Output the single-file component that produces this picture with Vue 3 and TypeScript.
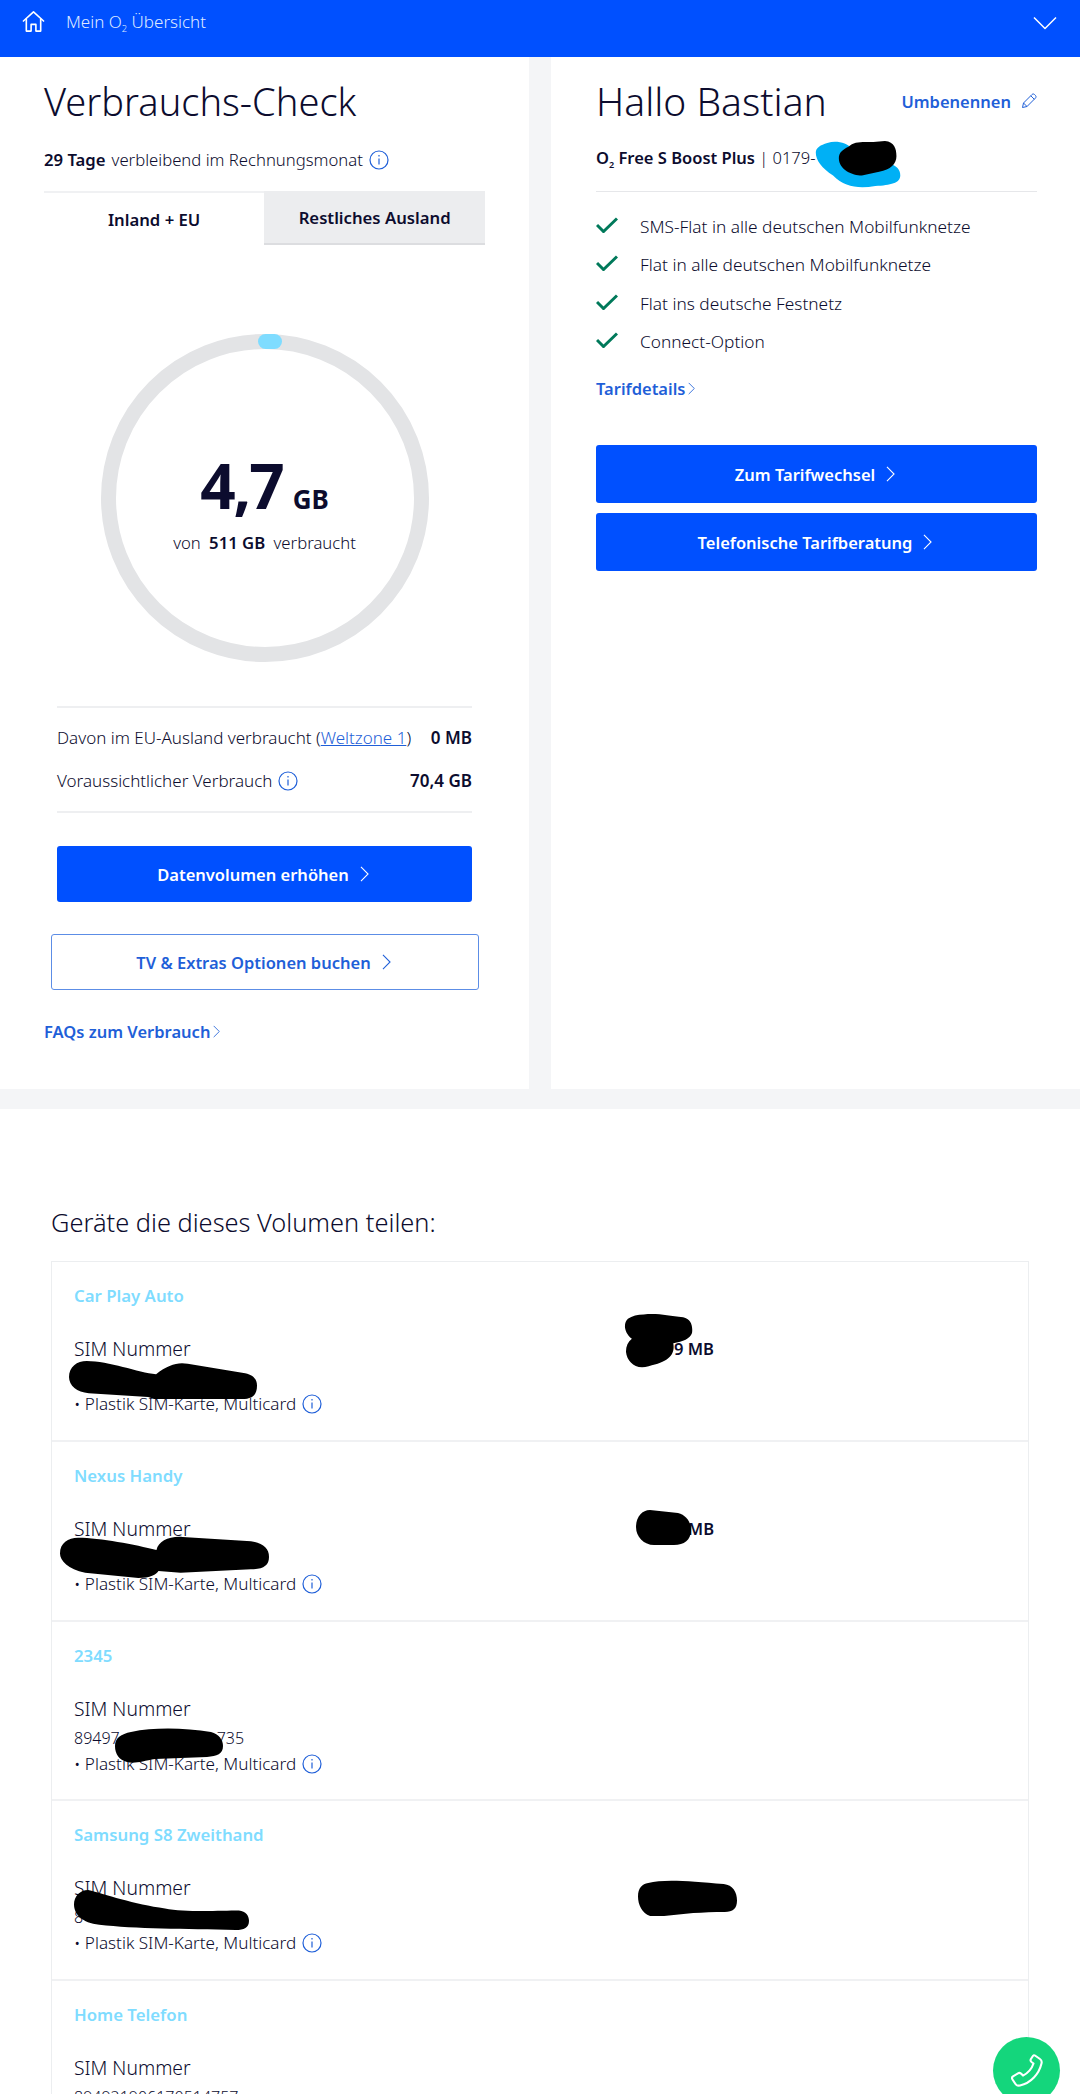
<script setup lang="ts">
interface Scribble { cls: string; d: string; vw: number; vh: number }
interface Device { name: string; sim: string; tail: string; amount: string; scribbles: Scribble[] }
const features: string[] = [
  'SMS-Flat in alle deutschen Mobilfunknetze',
  'Flat in alle deutschen Mobilfunknetze',
  'Flat ins deutsche Festnetz',
  'Connect-Option',
]
const devices: Device[] = [
  { name: 'Car Play Auto', sim: '', tail: '', amount: '9 MB', scribbles: [
    { cls: 's1a', vw: 190, vh: 42, d: 'M18 2C40 2 70 14 88 16C100 6 110 3 120 5L178 15C187 17 190 22 190 28C190 38 185 42 175 42L110 42C100 45 90 44 80 40L20 36C8 35 0 28 0 19C0 8 8 2 18 2Z' },
    { cls: 's1b', vw: 70, vh: 78, d: 'M20 2C35 0 45 4 60 6C68 8 70 18 69 28C67 36 60 40 50 42C52 58 46 68 25 74C12 80 3 68 2 54C2 46 4 40 8 36C0 28-1 14 4 8C8 4 14 2 20 2Z' },
  ] },
  { name: 'Nexus Handy', sim: '', tail: '', amount: 'MB', scribbles: [
    { cls: 's2a', vw: 208, vh: 48, d: 'M18 2C40 2 75 10 96 16C98 6 108 0 122 1L190 6C202 8 208 14 208 24C208 34 202 38 190 38L120 42L98 40C96 44 90 48 78 48L25 42C8 38 0 28 0 20C0 8 8 2 18 2Z' },
    { cls: 's2b', vw: 55, vh: 35, d: 'M14 0L42 3C50 5 55 12 55 20C55 30 48 35 38 35L18 35C8 35 0 27 0 17C0 7 6 0 14 0Z' },
  ] },
  { name: '2345', sim: '89497', tail: '735', amount: '', scribbles: [
    { cls: 's3a', vw: 108, vh: 35, d: 'M16 4C40-1 70 0 96 4C104 6 108 12 108 18C108 26 102 28 92 29L40 31C28 33 20 36 12 34C4 32 0 26 0 18C0 10 6 6 16 4Z' },
  ] },
  { name: 'Samsung S8 Zweithand', sim: '8', tail: '', amount: '', scribbles: [
    { cls: 's4a', vw: 173, vh: 39, d: 'M14 0C30 4 60 14 90 18C110 22 145 20 163 20C170 21 173 25 173 30C173 37 168 39 160 39C110 38 60 38 25 34C8 32 0 24 0 14C0 6 6 0 14 0Z' },
    { cls: 's4b', vw: 97, vh: 35, d: 'M10 3C25-1 50 1 84 4C93 5 97 12 97 20C97 28 93 31 85 31C60 31 40 33 18 36C6 36 0 26 0 16C0 8 4 4 10 3Z' },
  ] },
  { name: 'Home Telefon', sim: '894921906170514757', tail: '', amount: '', scribbles: [] },
]
</script>

<template>
  <div class="page">
    <header class="top">
      <svg class="home" viewBox="0 0 24 24" fill="none" stroke="#fff" stroke-width="1.700" stroke-linecap="round" stroke-linejoin="round">
        <path d="M1.500 11.500L12 2l10.500 9.500" />
        <path d="M4.500 9.500V22h5v-7h5v7h5V9.500" />
      </svg>
      <span class="crumb">Mein O<sub>2</sub> Übersicht</span>
      <svg class="caret" viewBox="0 0 24 14" fill="none" stroke="#fff" stroke-width="1.500" stroke-linejoin="round">
        <path d="M1 1.500l11 11 11-11" />
      </svg>
    </header>

    <div class="cards">
      <section class="card left">
        <h1>Verbrauchs-Check</h1>
        <p class="days"><b>29 Tage</b> verbleibend im Rechnungsmonat
          <svg class="info" viewBox="0 0 20 20"><circle cx="10" cy="10" r="9" /><path d="M10 8.500v6M10 5v1.400" /></svg>
        </p>
        <div class="tabs">
          <div class="tab on">Inland + EU</div>
          <div class="tab off">Restliches Ausland</div>
        </div>

        <div class="gauge">
          <div class="ring">
            <span class="knob"></span>
            <div class="val"><b class="num">4,7</b><b class="unit">GB</b></div>
            <div class="of">von <b>511 GB</b> verbraucht</div>
          </div>
        </div>

        <div class="stats">
          <div class="stat">
            <span>Davon im EU-Ausland verbraucht (<a>Weltzone 1</a>)</span><b>0 MB</b>
          </div>
          <div class="stat">
            <span class="with-i">Voraussichtlicher Verbrauch
              <svg class="info" viewBox="0 0 20 20"><circle cx="10" cy="10" r="9" /><path d="M10 8.500v6M10 5v1.400" /></svg>
            </span><b>70,4 GB</b>
          </div>
        </div>

        <button class="btn solid inset">Datenvolumen erhöhen
          <svg class="chev" viewBox="0 0 10 18"><path d="M1 1l8 8-8 8" /></svg>
        </button>
        <button class="btn outline">TV &amp; Extras Optionen buchen
          <svg class="chev" viewBox="0 0 10 18"><path d="M1 1l8 8-8 8" /></svg>
        </button>
        <a class="link faq">FAQs zum Verbrauch<svg class="chev small" viewBox="0 0 10 18"><path d="M1 1l8 8-8 8" /></svg></a>
      </section>

      <section class="card right">
        <div class="hello">
          <h1>Hallo Bastian</h1>
          <a class="rename">Umbenennen
            <svg class="pen" viewBox="0 0 16 16" fill="none" stroke="#1f5fd8" stroke-width="1" stroke-linejoin="round">
              <path d="M1.500 14.500l1-4.500L11 1.500c.8-.7 1.800-.7 2.500 0l1 1c.7.7.7 1.700 0 2.500L6 13.500z" />
              <path d="M2.500 10l3.500 3.500M9.800 2.800l3.500 3.500" />
            </svg>
          </a>
        </div>
        <div class="plan">
          <b>O<sub>2</sub> Free S Boost Plus</b> | 0179-
          <svg class="scr-phone" viewBox="0 0 90 50">
            <path d="M12 2C22-1 32 2 38 8L74 22C85 26 88 30 88 36C88 44 78 46 62 47C44 50 30 48 18 36C6 28 0 20 0 12C0 7 5 4 12 2Z" fill="#00b0f5" />
            <path d="M34 6C40 0 48 1 60 1L72 0C82 1 84 8 84 16C84 24 78 30 66 32L48 36C38 36 24 30 24 18C24 12 28 9 34 6Z" fill="#000" />
          </svg>
        </div>
        <ul class="feats">
          <li v-for="f in features" :key="f">
            <svg class="tick" viewBox="0 0 22 16" fill="none" stroke="#00795a" stroke-width="3"><path d="M1 8l6.500 6.500L21 1.500" /></svg>
            <span>{{ f }}</span>
          </li>
        </ul>
        <a class="link details">Tarifdetails<svg class="chev small" viewBox="0 0 10 18"><path d="M1 1l8 8-8 8" /></svg></a>
        <button class="btn solid wide first">Zum Tarifwechsel
          <svg class="chev" viewBox="0 0 10 18"><path d="M1 1l8 8-8 8" /></svg>
        </button>
        <button class="btn solid wide">Telefonische Tarifberatung
          <svg class="chev" viewBox="0 0 10 18"><path d="M1 1l8 8-8 8" /></svg>
        </button>
      </section>
    </div>
    <div class="band"></div>

    <section class="devices">
      <h2>Geräte die dieses Volumen teilen:</h2>
      <div class="list">
        <article v-for="d in devices" :key="d.name" class="row">
          <div class="dname">{{ d.name }}</div>
          <div class="simline">
            <span>SIM Nummer</span>
            <b class="amount">{{ d.amount }}</b>
          </div>
          <div class="simno">{{ d.sim }}<span v-if="d.tail" class="tail">{{ d.tail }}</span></div>
          <div class="kind">• Plastik SIM-Karte, Multicard
            <svg class="info" viewBox="0 0 20 20"><circle cx="10" cy="10" r="9" /><path d="M10 8.500v6M10 5v1.400" /></svg>
          </div>
          <svg v-for="s in d.scribbles" :key="s.cls" class="scr" :class="s.cls" :viewBox="`0 0 ${s.vw} ${s.vh}`" preserveAspectRatio="none">
            <path :d="s.d" fill="#000" />
          </svg>
        </article>
      </div>
    </section>

    <div class="call">
      <svg viewBox="0 0 32 33" fill="none" stroke="#fff" stroke-width="2.100" stroke-linejoin="round">
        <path d="M24 1.500l5 3.500c1.500 1 2 2.500 1.500 4.500C28 20 20 29 9 31.500c-2 .4-3.500 0-4.500-1.500L1.500 25.500c-.8-1.200-.5-2.500.5-3.200l5-3c1-.6 2-.5 3 .3l2 2C17 19 21 14 22.500 9.500l-2-1.500c-1-.8-1.200-1.900-.6-3l2-3c.6-.9 1.400-1 2.100-.5z" />
      </svg>
    </div>
  </div>
</template>

<style>
html, body { margin: 0; background: #fff; }
</style>

<style scoped>
.page {
  position: relative;
  width: 1080px;
  height: 2094px;
  overflow: hidden;
  background: #fff;
  color: #0c0c2e;
  font-family: "Noto Sans", "Open Sans", sans-serif;
  font-weight: 300;
}
b { font-weight: 600; }
sub { font-size: 55%; line-height: 0; }

.top {
  height: 57px;
  background: #0050ff;
  display: flex;
  align-items: center;
  padding: 0 8px 14px 22px;
  box-sizing: border-box;
  color: #fff;
}
.home { width: 23px; height: 23px; }
.crumb { margin-left: 21px; font-size: 17px; color: #dfe9ff; }
.caret { width: 24px; height: 14px; margin-left: auto; margin-right: 15px; margin-top: 2px; }

.cards {
  display: flex;
  gap: 22px;
  background: #f4f5f7;
  height: 1032px;
}
.card { background: #fff; box-sizing: border-box; }
.left { width: 529px; padding: 16px 44px 0; }
.right { flex: 1; padding: 16px 44px 0 45px; }
h1 {
  margin: 0;
  font-size: 38px;
  line-height: 56px;
  font-weight: 300;
}
.hello h1 { font-size: 39px; }
.days { margin: 19px 0 0; font-size: 16.7px; line-height: 24px; display: flex; align-items: center; gap: 6px; }
.info { width: 20px; height: 20px; fill: none; stroke: #1f5fd8; stroke-width: 1.2; flex: none; vertical-align: -4px; }

.tabs { display: flex; width: 441px; margin-top: 19px; height: 54px; }
.tab { width: 50%; font-weight: 600; font-size: 16.7px; display: flex; align-items: center; justify-content: center; }
.tab.on { border-top: 2px solid #f0f1f3; box-sizing: border-box; }
.tab.off { width: 221px; background: #ecedef; border-bottom: 2px solid #dcdde0; box-sizing: border-box; }

.gauge { display: flex; justify-content: center; margin-top: 89px; width: 441px; }
.ring {
  position: relative;
  width: 328px;
  height: 328px;
  box-sizing: border-box;
  border: 15px solid #e3e4e6;
  border-radius: 50%;
  padding-top: 7px;
  display: flex;
  flex-direction: column;
  align-items: center;
  justify-content: center;
}
.knob {
  position: absolute;
  top: -15px;
  left: 50%;
  margin-left: -7px;
  width: 24px;
  height: 15px;
  background: #7fdcff;
  border-radius: 8px;
}
.val { display: flex; align-items: baseline; gap: 10px; }
.num { font-size: 62px; line-height: 70px; font-weight: 700; letter-spacing: -2px; }
.unit { font-size: 26px; font-weight: 700; }
.of { font-size: 16.7px; margin-top: 11px; }
.of b { margin: 0 4px; }

.stats {
  margin: 44px 0 0 13px;
  width: 415px;
  border-top: 2px solid #eeeff1;
  border-bottom: 2px solid #eeeff1;
  padding: 8px 0 9px;
  font-size: 17px;
}
.stat { display: flex; justify-content: space-between; align-items: center; height: 43px; }
.stat a { color: #1f5fd8; text-decoration: underline; }
.with-i { display: flex; align-items: center; gap: 6px; }

.btn {
  display: flex;
  align-items: center;
  justify-content: center;
  gap: 11px;
  padding: 0 3px 0 0;
  font-family: inherit;
  font-size: 16.5px;
  font-weight: 600;
  border-radius: 3px;
  box-sizing: border-box;
  cursor: pointer;
}
.solid { background: #0050ff; color: #fff; border: none; height: 56px; }
.inset { width: 415px; margin: 33px 0 0 13px; }
.outline { background: #fff; color: #1f5fd8; border: 1px solid #5c8de6; width: 428px; height: 56px; margin: 32px 0 0 7px; }
.wide { width: 441px; height: 58px; }
.first { margin-top: 45px; margin-bottom: 10px; }
.chev { width: 9px; height: 16px; fill: none; stroke: currentColor; stroke-width: 1.2; }
.chev.small { width: 7px; height: 13px; margin-left: 3px; }
.link { color: #1f5fd8; font-weight: 600; font-size: 16.5px; display: inline-flex; align-items: center; }
.faq { margin-top: 30px; }

.hello { display: flex; justify-content: space-between; align-items: center; }
.rename { color: #1f5fd8; font-weight: 600; font-size: 16.5px; display: flex; align-items: center; gap: 10px; }
.pen { width: 16px; height: 16px; }
.plan { position: relative; margin-top: 17px; font-size: 16.5px; line-height: 24px; padding-bottom: 21px; border-bottom: 1px solid #e6e7ea; }
.scr-phone { position: absolute; left: 218px; top: -5px; width: 90px; height: 48px; }
.feats { list-style: none; margin: 15px 0 0; padding: 0; font-size: 17.3px; }
.feats li { display: flex; align-items: center; height: 38.5px; }
.tick { width: 22px; height: 16px; margin-right: 22px; margin-top: -3px; }
.details { margin-top: 16px; }

.band { height: 20px; background: #f4f5f7; }
.devices { padding: 97px 51px 0 51px; }
h2 { margin: 0; font-size: 25.4px; line-height: 32px; font-weight: 300; }
.list { margin-top: 23px; border: 1px solid #eceef0; border-bottom: none; }
.row { position: relative; height: 179.8px; box-sizing: border-box; border-bottom: 2px solid #f0f1f3; padding: 22px 22px 0; font-size: 17.1px; }
.dname { color: #7fdcff; font-weight: 600; font-size: 16.8px; line-height: 24px; }
.simline { display: flex; margin-top: 29px; font-size: 19.3px; line-height: 24px; }
.amount { position: absolute; right: 314px; font-size: 16.5px; font-weight: 600; }
.simno { font-size: 16px; line-height: 24px; height: 24px; margin-top: 5px; }
.tail { margin-left: 97px; }
.kind { line-height: 24px; display: flex; align-items: center; gap: 6px; margin-top: 2px; }

.scr { position: absolute; }
.s1a { left: 17px; top: 97px; width: 188px; height: 40px; }
.s1b { left: 572px; top: 51px; width: 69px; height: 56px; }
.s2a { left: 8px; top: 94px; width: 209px; height: 42px; }
.s2b { left: 584px; top: 68px; width: 55px; height: 35px; }
.s3a { left: 63px; top: 106px; width: 108px; height: 35px; }
.s4a { left: 22px; top: 89px; width: 175px; height: 40px; }
.s4b { left: 586px; top: 79px; width: 99px; height: 36px; }

.call {
  position: absolute;
  left: 993px;
  top: 2037px;
  width: 67px;
  height: 67px;
  border-radius: 50%;
  background: #14d67c;
  display: flex;
  align-items: center;
  justify-content: center;
}
.call svg { width: 32px; height: 33px; }
</style>
